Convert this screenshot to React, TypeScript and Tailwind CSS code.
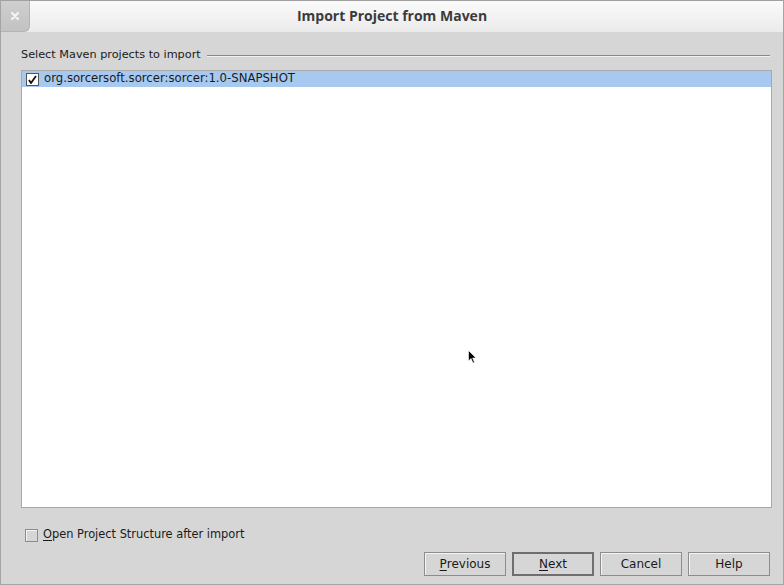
import { useState } from "react";

function Btn({ label, mnemonic, primary }: { label: string; mnemonic?: number; primary?: boolean }) {
  const text =
    mnemonic === undefined ? (
      label
    ) : (
      <>
        {label.slice(0, mnemonic)}
        <span className="underline underline-offset-2">{label[mnemonic]}</span>
        {label.slice(mnemonic + 1)}
      </>
    );
  return (
    <button
      className={`w-[82px] h-[24px] bg-[#d6d6d6] text-[12px] text-[#1a1a1a] flex items-center justify-center ${
        primary ? "border-2 border-[#6e6e6e]" : "border border-[#8c8c8c] shadow-[inset_1px_1px_0_#f4f4f4]"
      }`}
    >
      {text}
    </button>
  );
}

export default function App() {
  const [checked, setChecked] = useState(true);
  const [openStructure, setOpenStructure] = useState(false);

  return (
    <div
      className="relative w-[784px] h-[585px] bg-[#d6d6d6] border-x border-b border-[#a4a4a4] flex flex-col overflow-hidden"
      style={{ fontFamily: '"DejaVu Sans", sans-serif' }}
    >
      {/* title bar */}
      <div className="h-[32px] shrink-0 flex items-center border-t border-[#a0a0a0] bg-gradient-to-b from-[#fafafa] to-[#ebebeb] relative">
        <div className="w-[29px] h-[31px] bg-gradient-to-b from-[#cfcfcf] to-[#c2c2c2] rounded-br-[6px] border-r border-b border-[#b4b4b4] flex items-center justify-center">
          <svg width="10" height="10" viewBox="0 0 10 10">
            <path d="M2 2 L8 8 M8 2 L2 8" stroke="#f4f4f4" strokeWidth="2.2" strokeLinecap="round" />
          </svg>
        </div>
        <div
          className="absolute inset-x-0 top-[4px] text-center text-[14px] font-bold text-[#3b3b3b] pointer-events-none"
          style={{ fontFamily: '"Open Sans", sans-serif' }}
        >
          Import Project from Maven
        </div>
      </div>

      <div className="flex flex-col flex-1 pl-[20px] pr-[11px] pt-[15px] pb-[8px]">
        <div className="flex items-center gap-[6px] h-[16px] text-[11.25px] text-[#1a1a1a] pr-[2px]">
          <span>Select Maven projects to import</span>
          <div className="flex-1 h-[2px] border-t border-[#8a8a8a] border-b border-b-[#f2f2f2] mt-[1px]" />
        </div>

        <div className="mt-[7px] h-[438px] bg-white border border-[#a9a9a9]">
          <div className="h-[16px] bg-[#a7c9ef] flex items-center pl-[4px] gap-[5px]">
            <button
              onClick={() => setChecked(!checked)}
              className="w-[13px] h-[13px] bg-white border border-[#555] flex items-center justify-center"
            >
              {checked && (
                <svg width="9" height="9" viewBox="0 0 9 9">
                  <path d="M1 5 L3 8 L8 1" stroke="#111" strokeWidth="1.8" fill="none" />
                </svg>
              )}
            </button>
            <span className="text-[11.7px] text-[#1a1a1a]">org.sorcersoft.sorcer:sorcer:1.0-SNAPSHOT</span>
          </div>
        </div>

        <div className="mt-[20px] flex items-center gap-[5px] pl-[4px] h-[14px] text-[11.4px] text-[#1a1a1a]">
          <button
            onClick={() => setOpenStructure(!openStructure)}
            className="w-[13px] h-[13px] bg-[#d6d6d6] border border-[#8c8c8c] shadow-[inset_1px_1px_0_#f4f4f4]"
          />
          <span>
            <span className="underline underline-offset-2">O</span>pen Project Structure after import
          </span>
        </div>

        <div className="mt-auto flex justify-end gap-[6px] pr-[2px]">
          <Btn label="Previous" mnemonic={0} />
          <Btn label="Next" mnemonic={0} primary />
          <Btn label="Cancel" />
          <Btn label="Help" />
        </div>
      </div>

      {/* mouse pointer */}
      <svg className="absolute left-[467px] top-[350px]" width="10" height="16" viewBox="0 0 10 16">
        <path d="M0.5 0.5 L0.5 11 L3 8.5 L5 13 L6.5 12.3 L4.6 8 L8 8 Z" fill="#000" stroke="#fff" strokeWidth="0.6" />
      </svg>
    </div>
  );
}
